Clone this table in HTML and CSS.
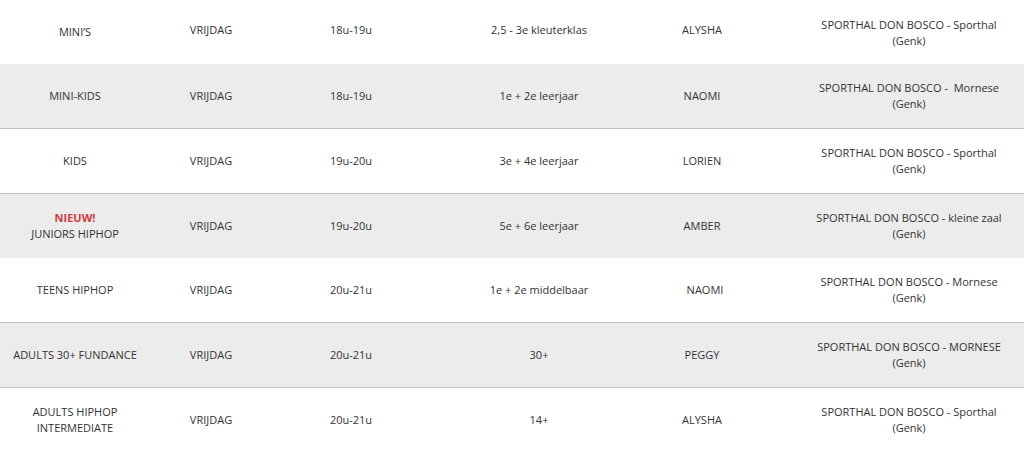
FILE: index.html
```html
<!DOCTYPE html>
<html lang="nl">
<head>
<meta charset="utf-8">
<link rel="stylesheet" href="styles.css">
</head>
<body>
<table class="schedule">
  <colgroup>
    <col class="c1"><col class="c2"><col class="c3"><col class="c4"><col class="c5"><col class="c6">
  </colgroup>
  <tbody>
    <tr class="row white first">
      <td class="name">MINI’S</td><td>VRIJDAG</td><td>18u-19u</td><td>2,5 - 3e kleuterklas</td><td>ALYSHA</td><td class="loc">SPORTHAL DON BOSCO - Sporthal (Genk)</td>
    </tr>
    <tr class="row grey line">
      <td class="name">MINI-KIDS</td><td>VRIJDAG</td><td>18u-19u</td><td>1e + 2e leerjaar</td><td>NAOMI</td><td class="loc">SPORTHAL DON BOSCO -&nbsp; Mornese (Genk)</td>
    </tr>
    <tr class="row white line">
      <td class="name">KIDS</td><td>VRIJDAG</td><td>19u-20u</td><td>3e + 4e leerjaar</td><td>LORIEN</td><td class="loc">SPORTHAL DON BOSCO - Sporthal (Genk)</td>
    </tr>
    <tr class="row grey">
      <td class="name"><span class="new">NIEUW!</span><br>JUNIORS HIPHOP</td><td>VRIJDAG</td><td>19u-20u</td><td>5e + 6e leerjaar</td><td>AMBER</td><td class="loc">SPORTHAL DON BOSCO - kleine zaal (Genk)</td>
    </tr>
    <tr class="row white line">
      <td class="name">TEENS HIPHOP</td><td>VRIJDAG</td><td>20u-21u</td><td>1e + 2e middelbaar</td><td class="shift">NAOMI</td><td class="loc">SPORTHAL DON BOSCO - Mornese (Genk)</td>
    </tr>
    <tr class="row grey line">
      <td class="name">ADULTS 30+ FUNDANCE</td><td>VRIJDAG</td><td>20u-21u</td><td>30+</td><td>PEGGY</td><td class="loc">SPORTHAL DON BOSCO - MORNESE (Genk)</td>
    </tr>
    <tr class="row white">
      <td class="name">ADULTS HIPHOP INTERMEDIATE</td><td>VRIJDAG</td><td>20u-21u</td><td>14+</td><td>ALYSHA</td><td class="loc">SPORTHAL DON BOSCO - Sporthal (Genk)</td>
    </tr>
  </tbody>
</table>
</body>
</html>
```

FILE: styles.css
```css
html, body {
  margin: 0;
  padding: 0;
  background: #ffffff;
}

body {
  font-family: "Open Sans", "Liberation Sans", sans-serif;
  font-size: 11px;
  color: #333333;
}

.schedule {
  width: 1024px;
  border-collapse: collapse;
  table-layout: fixed;
}

.c1 { width: 150px; }
.c2 { width: 122px; }
.c3 { width: 158px; }
.c4 { width: 218px; }
.c5 { width: 108px; }
.c6 { width: 268px; }

.row td {
  height: 64px;
  padding: 0;
  text-align: center;
  vertical-align: middle;
  line-height: 16px;
}

.row .name {
  padding: 0 5px;
}

.row .loc {
  padding: 0 15px 0 53px;
}

.row .shift {
  padding-left: 6px;
}

.first td {
  height: 60px;
  padding-bottom: 4px;
}

.first .loc {
  height: 62px;
  padding-bottom: 0;
  padding-top: 2px;
}

.white { background: #ffffff; }
.grey { background: #ececec; }

.line td {
  border-bottom: 1px solid #c2c2c2;
}

.new {
  color: #d23a3f;
  font-weight: 700;
}
```
